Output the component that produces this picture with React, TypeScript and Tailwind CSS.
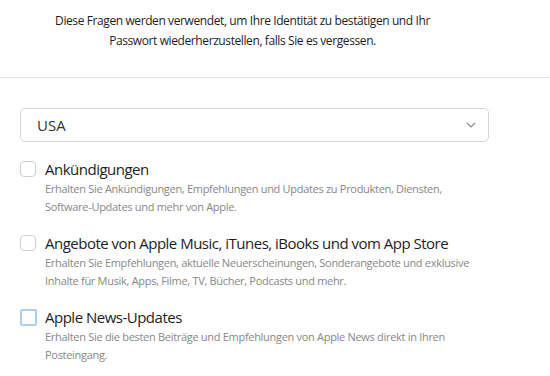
import React from "react";

const items = [
  {
    title: "Ankündigungen",
    desc: ["Erhalten Sie Ankündigungen, Empfehlungen und Updates zu Produkten, Diensten,", "Software-Updates und mehr von Apple."],
    focus: false,
  },
  {
    title: "Angebote von Apple Music, iTunes, iBooks und vom App Store",
    desc: ["Erhalten Sie Empfehlungen, aktuelle Neuerscheinungen, Sonderangebote und exklusive", "Inhalte für Musik, Apps, Filme, TV, Bücher, Podcasts und mehr."],
    focus: false,
  },
  {
    title: "Apple News-Updates",
    desc: ["Erhalten Sie die besten Beiträge und Empfehlungen von Apple News direkt in Ihren", "Posteingang."],
    focus: true,
  },
];

export default function App() {
  return (
    <div className="w-[550px] h-[376px] bg-white overflow-hidden text-[#333333]" style={{ fontFamily: '"Open Sans", "Liberation Sans", sans-serif' }}>
      <div className="border-b border-[#e5e5e5] h-[78px]">
        <div className="w-[485px] pt-[11px] text-center text-[12px] leading-[20px] text-[#1d1d1f] tracking-[-0.4px]">
          <p>Diese Fragen werden verwendet, um Ihre Identität zu bestätigen und Ihr</p>
          <p>Passwort wiederherzustellen, falls Sie es vergessen.</p>
        </div>
      </div>
      <div className="px-[20px] pt-[30px]">
        <div className="w-[469px] h-[34px] border border-[#d6d6d6] rounded-[5px] flex items-center justify-between pl-[16px] pr-[12px]">
          <span className="text-[15px] text-[#333333]">USA</span>
          <svg width="10" height="6" viewBox="0 0 10 6" fill="none">
            <path d="M1 1l4 4 4-4" stroke="#888" strokeWidth="1.1" />
          </svg>
        </div>
        <div className="flex flex-col gap-[17px] mt-[17px]">
          {items.map((it) => (
            <div key={it.title} className="flex gap-[9px]">
              <div className="pt-[2px] w-[16px] shrink-0">
                {it.focus ? (
                  <div className="w-[17px] h-[17px] rounded-[2px] border-2 border-[#a9cff4] bg-white" />
                ) : (
                  <div className="w-[16px] h-[16px] rounded-[4px] border border-[#cfcfcf] bg-white" />
                )}
              </div>
              <div>
                <div className="text-[15px] leading-[20px] text-[#1d1d1f] tracking-[-0.5px]">{it.title}</div>
                <div className="mt-[1px] text-[11px] leading-[18px] text-[#888888] tracking-[-0.3px]">
                  {it.desc.map((d) => (
                    <div key={d}>{d}</div>
                  ))}
                </div>
              </div>
            </div>
          ))}
        </div>
      </div>
    </div>
  );
}
